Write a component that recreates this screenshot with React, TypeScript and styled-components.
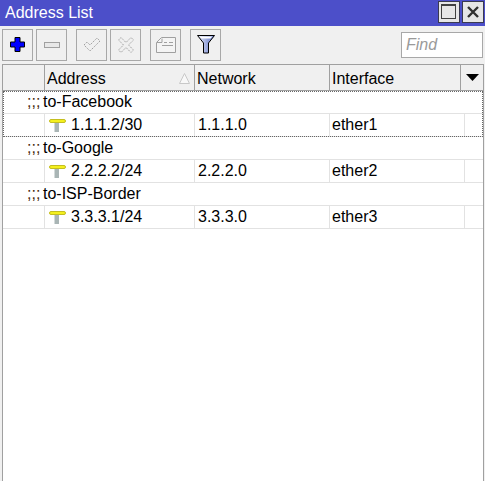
import styled, { createGlobalStyle } from 'styled-components';

const GlobalStyle = createGlobalStyle`
  html, body {
    margin: 0;
    padding: 0;
    height: 100%;
    overflow: hidden;
    background: #f0f0f0;
  }
  #root {
    height: 100%;
  }
`;

const Window = styled.div`
  display: flex;
  flex-direction: column;
  width: 485px;
  height: 481px;
  overflow: hidden;
  background: #f0f0f0;
  font-family: 'Liberation Sans', Arial, sans-serif;
  font-size: 16px;
  color: #000;
`;

const TitleBar = styled.div`
  display: flex;
  align-items: flex-start;
  justify-content: space-between;
  flex: 0 0 26px;
  box-sizing: border-box;
  padding: 1px 1px 0 5px;
  background: #4c4fc9;
  color: #fff;
`;

const TitleText = styled.span`
  line-height: 24px;
`;

const TitleButtons = styled.div`
  display: flex;
  gap: 2px;
`;

const TitleButton = styled.div`
  display: flex;
  align-items: center;
  justify-content: center;
  box-sizing: border-box;
  width: 22px;
  height: 22px;
  background: #e6e6e6;
  border: 1px solid #3a3a50;
`;

const Toolbar = styled.div`
  display: flex;
  align-items: center;
  flex: 0 0 38px;
  box-sizing: border-box;
  padding: 0 2px;
`;

const ToolButton = styled.div<{ $gap?: number }>`
  display: flex;
  align-items: center;
  justify-content: center;
  box-sizing: border-box;
  width: 31px;
  height: 32px;
  margin-left: ${(p) => p.$gap ?? 0}px;
  padding-bottom: 1px;
  background: #f0f0f0;
  border: 1px solid #a8a8a8;
`;

const FindBox = styled.div`
  display: flex;
  align-items: center;
  box-sizing: border-box;
  width: 82px;
  height: 26px;
  margin-left: auto;
  padding-left: 4px;
  background: #fff;
  border: 1px solid #a8a8a8;
  color: #9a9a9a;
  font-style: italic;
`;

const Table = styled.div`
  display: flex;
  flex-direction: column;
  flex: 1;
  box-sizing: border-box;
  margin: 0 1px 0 2px;
  background: #fff;
  border-top: 1px solid #a0a0a0;
  border-left: 1px solid #a0a0a0;
  border-right: 1px solid #a0a0a0;
`;

const HeaderRow = styled.div`
  display: flex;
  flex: 0 0 26px;
  box-sizing: border-box;
  background: #f0f0f0;
  border-bottom: 1px solid #a0a0a0;
`;

const HeaderCell = styled.div<{ $w: number }>`
  display: flex;
  align-items: center;
  justify-content: space-between;
  flex: 0 0 ${(p) => p.$w}px;
  box-sizing: border-box;
  padding: 2px 4px 0 2px;
  border-right: 1px solid #a0a0a0;
`;

const ArrowCell = styled.div`
  display: flex;
  flex: 1;
  align-items: center;
  justify-content: center;
`;

const Group = styled.div<{ $focused?: boolean }>`
  outline: ${(p) => (p.$focused ? '1px dotted #666' : 'none')};
  outline-offset: -1px;
`;

const CommentRow = styled.div`
  display: flex;
  align-items: center;
  height: 23px;
  box-sizing: border-box;
  padding-left: 24px;
  border-bottom: 1px solid #e2e2e2;
`;

const CommentMark = styled.span`
  width: 16px;
  color: #4a2c10;
`;

const DataRow = styled.div`
  display: flex;
  height: 23px;
  box-sizing: border-box;
  border-bottom: 1px solid #e2e2e2;
`;

const DataCell = styled.div<{ $w?: number; $pad?: number }>`
  display: flex;
  align-items: center;
  gap: 5px;
  flex: ${(p) => (p.$w ? `0 0 ${p.$w}px` : '1')};
  box-sizing: border-box;
  padding-left: ${(p) => p.$pad ?? 3}px;
  border-right: 1px solid #e2e2e2;
  &:last-child {
    border-right: none;
  }
`;

const PlusIcon = () => (
  <svg width="15" height="15" viewBox="0 0 15 15">
    <path d="M5 .5h5v4.500h4.500v5H10v4.500H5V10H.5V5H5z" fill="#0000ff" stroke="#000" />
  </svg>
);

const MinusIcon = () => (
  <svg width="16" height="6" viewBox="0 0 16 6">
    <rect x=".5" y=".5" width="15" height="5" fill="#e8e8e8" stroke="#a0a0a0" />
  </svg>
);

const CheckIcon = () => (
  <svg width="18" height="16" viewBox="0 0 18 16">
    <path
      d="M1 8l3-3 3 3 7-7 3 3-10 10z"
      fill="none"
      stroke="#a0a0a0"
      strokeDasharray="1.5 1"
    />
  </svg>
);

const CrossIcon = () => (
  <svg width="16" height="16" viewBox="0 0 16 16">
    <path
      d="M3 .5l5 5 5-5 2.500 2.500-5 5 5 5-2.500 2.500-5-5-5 5L.5 13l5-5-5-5z"
      fill="none"
      stroke="#a0a0a0"
      strokeDasharray="1.5 1"
    />
  </svg>
);

const NoteIcon = () => (
  <svg width="20" height="16" viewBox="0 0 20 16">
    <path d="M.5 5.500l5-5h14v15H.5z" fill="#f4f4f4" stroke="#a0a0a0" />
    <path d="M1 5.500h5v-4M8 5.500h3M13 5.500h4M6 8.500h11" fill="none" stroke="#a0a0a0" />
  </svg>
);

const FilterIcon = () => (
  <svg width="18" height="19" viewBox="0 0 18 19">
    <defs>
      <linearGradient id="funnel" x1="0" y1="0" x2="1" y2="0">
        <stop offset="0" stopColor="#e8ecf8" />
        <stop offset="1" stopColor="#5a70c8" />
      </linearGradient>
    </defs>
    <path d="M.5.5h17L11.500 8v10h-5V8z" fill="url(#funnel)" stroke="#000" />
    <path d="M2.500 1.500h13l-2 2h-9z" fill="#fff" />
  </svg>
);

const MaximizeIcon = () => (
  <svg width="16" height="16" viewBox="0 0 16 16">
    <rect x=".5" y=".5" width="14" height="14" fill="#e6e6e6" stroke="#404040" />
    <rect x="0" y="0" width="15" height="2" fill="#404040" />
  </svg>
);

const CloseIcon = () => (
  <svg width="12" height="12" viewBox="0 0 12 12">
    <path d="M1 1l10 10M11 1L1 11" stroke="#303030" strokeWidth="2.400" />
  </svg>
);

const SortIcon = () => (
  <svg width="11" height="11" viewBox="0 0 11 11">
    <path d="M5.500 .5l5 10H.5z" fill="#f8f8f8" stroke="#c8c8c8" />
  </svg>
);

const DropIcon = () => (
  <svg width="13" height="7" viewBox="0 0 13 7">
    <path d="M0 0h13L6.500 7z" fill="#000" />
  </svg>
);

const AddressIcon = () => (
  <svg width="17" height="16" viewBox="0 0 17 16">
    <rect x="5.500" y="5" width="4.500" height="10" fill="#a9b5b5" />
    <rect x=".5" y="2.500" width="16" height="3" rx="1.500" fill="#f4f01e" stroke="#c4be20" />
  </svg>
);

const rows = [
  { comment: 'to-Facebook', address: '1.1.1.2/30', network: '1.1.1.0', iface: 'ether1' },
  { comment: 'to-Google', address: '2.2.2.2/24', network: '2.2.2.0', iface: 'ether2' },
  { comment: 'to-ISP-Border', address: '3.3.3.1/24', network: '3.3.3.0', iface: 'ether3' },
];

const App = () => (
  <Window>
    <GlobalStyle />
    <TitleBar>
      <TitleText>Address List</TitleText>
      <TitleButtons>
        <TitleButton>
          <MaximizeIcon />
        </TitleButton>
        <TitleButton>
          <CloseIcon />
        </TitleButton>
      </TitleButtons>
    </TitleBar>
    <Toolbar>
      <ToolButton>
        <PlusIcon />
      </ToolButton>
      <ToolButton $gap={3}>
        <MinusIcon />
      </ToolButton>
      <ToolButton $gap={9}>
        <CheckIcon />
      </ToolButton>
      <ToolButton $gap={3}>
        <CrossIcon />
      </ToolButton>
      <ToolButton $gap={9}>
        <NoteIcon />
      </ToolButton>
      <ToolButton $gap={9}>
        <FilterIcon />
      </ToolButton>
      <FindBox>Find</FindBox>
    </Toolbar>
    <Table>
      <HeaderRow>
        <HeaderCell $w={42} />
        <HeaderCell $w={150}>
          Address
          <SortIcon />
        </HeaderCell>
        <HeaderCell $w={135}>Network</HeaderCell>
        <HeaderCell $w={131}>Interface</HeaderCell>
        <ArrowCell>
          <DropIcon />
        </ArrowCell>
      </HeaderRow>
      {rows.map((row, i) => (
        <Group key={row.comment} $focused={i === 0}>
          <CommentRow>
            <CommentMark>;;;</CommentMark>
            {row.comment}
          </CommentRow>
          <DataRow>
            <DataCell $w={42} />
            <DataCell $w={150} $pad={4}>
              <AddressIcon />
              {row.address}
            </DataCell>
            <DataCell $w={135}>{row.network}</DataCell>
            <DataCell $w={135} $pad={2}>
              {row.iface}
            </DataCell>
            <DataCell />
          </DataRow>
        </Group>
      ))}
    </Table>
  </Window>
);

export default App;
